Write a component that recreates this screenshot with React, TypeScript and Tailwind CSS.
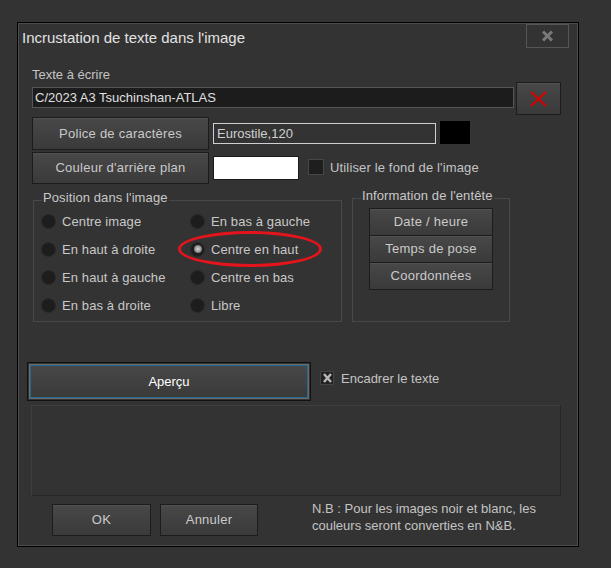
import React from "react";

function Btn({ className = "", children }: { className?: string; children?: React.ReactNode }) {
  return (
    <div
      className={
        "flex items-center justify-center border border-[#1c1c1c] bg-linear-to-b from-[#484848] to-[#3a3a3a] tracking-[0.25px] text-[#cacaca] shadow-[inset_0_1px_0_#515151] " +
        className
      }
    >
      {children}
    </div>
  );
}

function Radio({ label, checked = false }: { label: string; checked?: boolean }) {
  return (
    <div className="flex h-[28px] items-center">
      <div className="flex h-[15px] w-[15px] items-center justify-center rounded-full border border-[#2a2a2a] bg-[#1d1d1d]">
        {checked && (
          <div className="h-[8px] w-[8px] rounded-full bg-[radial-gradient(circle,#d8d8d8_0%,#9a9a9a_50%,#3a3a3a_100%)]" />
        )}
      </div>
      <span className="ml-[6px] leading-[15px] tracking-[0.1px] text-[#c8c8c8]">{label}</span>
    </div>
  );
}

export default function App() {
  return (
    <div className="min-h-[568px] w-[611px] bg-[#333333] pl-[17px] pt-[22px] font-['Liberation_Sans',Arial,sans-serif] text-[13px] text-[#c8c8c8]">
      <div className="flex h-[525px] w-[562px] flex-col border border-black bg-[#333333] shadow-[inset_0_0_0_1px_#4c4c4c]">
        {/* title row */}
        <div className="flex h-[27px] items-start justify-between pl-[4px] pr-[9px]">
          <span className="mt-[7px] text-[15px] leading-[16px] text-[#e2e2e2]">Incrustation de texte dans l'image</span>
          <div className="mt-px flex h-[24px] w-[43px] items-center justify-center border border-[#555555] bg-[#333333]">
            <svg width="13" height="12" viewBox="0 0 13 12">
              <path d="M2 1.5 L11 10.5 M11 1.5 L2 10.5" stroke="#7a7a7a" strokeWidth="3" />
            </svg>
          </div>
        </div>

        {/* label */}
        <div className="mt-[17px] pl-[14px] leading-[15px] text-[#c4c4c4]">Texte à écrire</div>

        {/* input row */}
        <div className="flex h-[33px] items-start pl-[14px]">
          <div className="mt-[5px] flex h-[21px] w-[482px] items-center border border-[#555555] bg-[#1c1c1c] pl-[2px] text-[#e0e0e0]">
            C/2023 A3 Tsuchinshan-ATLAS
          </div>
          <Btn className="ml-[2px] h-[33px] w-[45px]">
            <svg width="17" height="16" viewBox="0 0 17 16">
              <path d="M1 1 L16 15 M16 1 L1 15" stroke="#d90000" strokeWidth="2" />
            </svg>
          </Btn>
        </div>

        {/* font row */}
        <div className="mt-[2px] flex h-[33px] items-start pl-[14px]">
          <Btn className="h-[33px] w-[177px]">Police de caractères</Btn>
          <div className="ml-[4px] mt-[6px] flex h-[21px] w-[223px] items-center border border-[#cfcfcf] bg-[#333333] pl-[3px] text-[#d0d0d0]">
            Eurostile,120
          </div>
          <div className="ml-[4px] mt-[4px] h-[23px] w-[30px] bg-black" />
        </div>

        {/* background colour row */}
        <div className="mt-[2px] flex h-[32px] items-start pl-[14px]">
          <Btn className="h-[32px] w-[177px]">Couleur d'arrière plan</Btn>
          <div className="ml-[4px] mt-[4px] h-[24px] w-[86px] border border-[#1a1a1a] bg-white" />
          <div className="ml-[9px] mt-[7px] h-[16px] w-[16px] border border-[#474747] bg-[#1e1e1e]" />
          <span className="ml-[6px] mt-[8px] leading-[15px] tracking-[0.15px] text-[#c4c4c4]">Utiliser le fond de l'image</span>
        </div>

        {/* groups */}
        <div className="mt-[14px] flex items-start pl-[15px]">
          <div className="relative mt-[2px] h-[122px] w-[309px] border border-[#484848]">
            <span className="absolute -top-[11px] left-[8px] bg-[#333333] px-px leading-[15px] tracking-[0.1px] text-[#c8c8c8]">
              Position dans l'image
            </span>
            <div className="grid grid-cols-[149px_149px] pl-[7px] pt-[6px]">
              <Radio label="Centre image" />
              <Radio label="En bas à gauche" />
              <Radio label="En haut à droite" />
              <Radio label="Centre en haut" checked />
              <Radio label="En haut à gauche" />
              <Radio label="Centre en bas" />
              <Radio label="En bas à droite" />
              <Radio label="Libre" />
            </div>
            <div className="pointer-events-none absolute left-[144px] top-[30px] h-[36px] w-[144px] rounded-[50%] border-[3px] border-[#e3141c]" />
          </div>

          <div className="relative ml-[10px] h-[124px] w-[158px] border border-[#484848]">
            <span className="absolute -top-[11px] left-[8px] bg-[#333333] px-px leading-[15px] tracking-[0.1px] text-[#c8c8c8]">
              Information de l'entête
            </span>
            <div className="flex flex-col pl-[16px] pt-[9px]">
              <Btn className="h-[28px] w-[124px]">Date / heure</Btn>
              <Btn className="-mt-px h-[28px] w-[124px]">Temps de pose</Btn>
              <Btn className="-mt-px h-[28px] w-[124px]">Coordonnées</Btn>
            </div>
          </div>
        </div>

        {/* apercu row */}
        <div className="mt-[40px] flex h-[39px] items-start pl-[9px]">
          <div className="h-[39px] w-[284px] border border-[#111111] p-px">
            <div className="h-full w-full border border-[#6a6a6a]">
              <div className="flex h-full w-full items-center justify-center border border-[#236a8c] bg-linear-to-b from-[#474747] to-[#3a3a3a] text-white">
                Aperçu
              </div>
            </div>
          </div>
          <div className="ml-[9px] mt-[9px] flex h-[14px] w-[14px] items-center justify-center border border-[#444444] bg-[#222222]">
            <svg width="9" height="10" viewBox="0 0 9 10">
              <path d="M1 1 L8 9 M8 1 L1 9" stroke="#b8b8b8" strokeWidth="2.4" />
            </svg>
          </div>
          <span className="ml-[7px] mt-[9px] leading-[15px] text-[#c4c4c4]">Encadrer le texte</span>
        </div>

        {/* preview panel */}
        <div className="ml-[13px] mt-[4px] h-[91px] w-[530px] border border-[#262626] border-t-[#3f3f3f] border-l-[#3f3f3f] bg-[#333333]" />

        {/* bottom row */}
        <div className="mt-[4px] flex items-start pl-[34px]">
          <Btn className="mt-[4px] h-[32px] w-[99px]">OK</Btn>
          <Btn className="ml-[9px] mt-[4px] h-[32px] w-[98px]">Annuler</Btn>
          <div className="ml-[54px] leading-[17px] text-[#c4c4c4]">
            N.B : Pour les images noir et blanc, les
            <br />
            couleurs seront converties en N&amp;B.
          </div>
        </div>
      </div>
    </div>
  );
}
